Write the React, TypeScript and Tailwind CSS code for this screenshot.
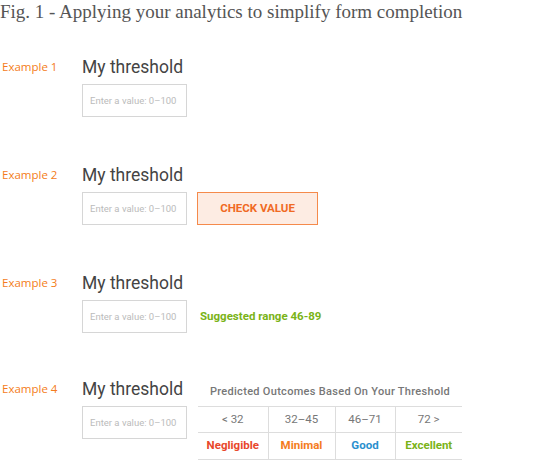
import React from "react";

const roboto = { fontFamily: "Roboto, 'Liberation Sans', sans-serif" };

function Label({ n }: { n: number }) {
  return (
    <div
      className="w-[82px] shrink-0 pl-[2px] text-[11.5px] leading-[22px] text-[#f47c20]"
      style={{ fontFamily: "'Open Sans', sans-serif" }}
    >
      Example {n}
    </div>
  );
}

function Heading() {
  return <h2 className="text-[17.5px] leading-[22px] text-[#444]">My threshold</h2>;
}

function ValueInput() {
  return (
    <input
      className="w-[105px] h-[33px] border border-[#d6d6d6] bg-white px-[7px] text-[9.5px] text-[#444] placeholder:text-[#bbb] outline-none"
      placeholder="Enter a value: 0–100"
    />
  );
}

const outcomes = [
  { range: "< 32", label: "Negligible", color: "text-[#e8472b]", w: "w-[70px]" },
  { range: "32–45", label: "Minimal", color: "text-[#f47c20]", w: "w-[67px]" },
  { range: "46–71", label: "Good", color: "text-[#2a8fce]", w: "w-[60px]" },
  { range: "72 >", label: "Excellent", color: "text-[#7ab317]", w: "w-[67px]" },
];

export default function App() {
  return (
    <div className="w-[550px] h-[461px] overflow-hidden bg-white" style={roboto}>
      <p
        className="text-[19px] leading-[24px] text-[#555]"
        style={{ fontFamily: "'Liberation Serif', serif" }}
      >
        Fig. 1 - Applying your analytics to simplify form completion
      </p>

      <div className="mt-[32px] flex flex-col gap-[47px]">
        {/* example 1 */}
        <div className="flex">
          <Label n={1} />
          <div className="flex flex-col gap-[6px]">
            <Heading />
            <ValueInput />
          </div>
        </div>

        {/* example 2 */}
        <div className="flex">
          <Label n={2} />
          <div className="flex flex-col gap-[6px]">
            <Heading />
            <div className="flex gap-[10px]">
              <ValueInput />
              <button className="w-[121px] h-[33px] border border-[#f58a4b] bg-[#fdece3] text-[11.5px] font-bold text-[#f06a23]">
                CHECK VALUE
              </button>
            </div>
          </div>
        </div>

        {/* example 3 */}
        <div className="flex">
          <Label n={3} />
          <div className="flex flex-col gap-[6px]">
            <Heading />
            <div className="flex items-center gap-[13px]">
              <ValueInput />
              <span className="text-[11.5px] font-bold text-[#7ab317]">Suggested range 46-89</span>
            </div>
          </div>
        </div>

        {/* example 4 */}
        <div className="flex -mt-[2px]">
          <Label n={4} />
          <div className="flex gap-[11px]">
            <div className="flex flex-col gap-[6px]">
              <Heading />
              <ValueInput />
            </div>
            <div className="flex flex-col pt-[7px]">
              <p className="text-center text-[11px] font-medium leading-[14px] tracking-[0.3px] text-[#777]">
                Predicted Outcomes Based On Your Threshold
              </p>
              <table className="mt-[7px] border-collapse text-[11.5px]">
                <tbody>
                  <tr className="border-y border-[#ddd]">
                    {outcomes.map((o, i) => (
                      <td
                        key={o.range}
                        className={`${o.w} h-[26px] text-center text-[#777] ${i > 0 ? "border-l border-[#ddd]" : ""}`}
                      >
                        {o.range}
                      </td>
                    ))}
                  </tr>
                  <tr className="border-b border-[#ddd]">
                    {outcomes.map((o, i) => (
                      <td
                        key={o.label}
                        className={`h-[27px] text-center font-bold ${o.color} ${i > 0 ? "border-l border-[#ddd]" : ""}`}
                      >
                        {o.label}
                      </td>
                    ))}
                  </tr>
                </tbody>
              </table>
            </div>
          </div>
        </div>
      </div>
    </div>
  );
}
